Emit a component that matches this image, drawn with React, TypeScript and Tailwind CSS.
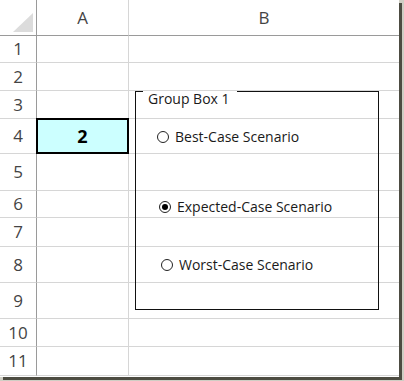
import React from "react";

const rows = [
  { n: "1", h: 27 },
  { n: "2", h: 28 },
  { n: "3", h: 28 },
  { n: "4", h: 35 },
  { n: "5", h: 37 },
  { n: "6", h: 27 },
  { n: "7", h: 29 },
  { n: "8", h: 36 },
  { n: "9", h: 36 },
  { n: "10", h: 28 },
  { n: "11", h: 29 },
];

function Radio({ checked, label, left, top }: { checked?: boolean; label: string; left: number; top: number }) {
  return (
    <div className="absolute flex items-center gap-[6px]" style={{ left, top }}>
      <span className="flex h-[12px] w-[12px] items-center justify-center rounded-full border border-[#222] bg-white">
        {checked && <span className="h-[6px] w-[6px] rounded-full bg-black" />}
      </span>
      <span className="text-[14px] leading-none text-[#1a1a1a]">{label}</span>
    </div>
  );
}

export default function App() {
  return (
    <div className="h-[381px] w-[404px] bg-[#cfcec4]" style={{ fontFamily: '"Open Sans", "Noto Sans", sans-serif' }}>
      <div className="relative h-[377px] w-[399px] bg-white shadow-[3px_3px_0_#4d4c42]">
        <div className="grid grid-cols-[37px_92px_270px]">
          {/* header */}
          <div className="relative h-[36px] border-b border-r border-[#9a9a9a]">
            <div
              className="absolute left-[13px] top-[13px] h-[19px] w-[20px] bg-[#dcdcdc]"
              style={{ clipPath: "polygon(100% 0, 100% 100%, 0 100%)" }}
            />
          </div>
          <div className="flex h-[36px] items-center justify-center border-b border-r border-b-[#9a9a9a] border-r-[#d6d6d6] text-[17px] text-[#444]">
            A
          </div>
          <div className="flex h-[36px] items-center justify-center border-b border-[#9a9a9a] text-[17px] text-[#444]">
            B
          </div>
          {rows.map((r) => (
            <React.Fragment key={r.n}>
              <div
                className="flex items-center justify-center border-b border-r border-b-[#d6d6d6] border-r-[#9a9a9a] text-[17px] text-[#444]"
                style={{ height: r.h }}
              >
                {r.n}
              </div>
              <div className="relative border-b border-r border-[#d6d6d6]" style={{ height: r.h }}>
                {r.n === "4" && (
                  <div className="absolute left-[-1px] top-[-1px] right-[-1px] bottom-[-1px] flex items-center justify-center border-2 border-black bg-[#ccffff] text-[18px] font-bold text-black">
                    2
                  </div>
                )}
              </div>
              <div className="border-b border-[#d6d6d6]" style={{ height: r.h }} />
            </React.Fragment>
          ))}
        </div>

        {/* Group box form control */}
        <div className="absolute left-[135px] top-[91px] h-[219px] w-[244px] border border-[#111]">
          <span className="absolute left-[7px] top-[-1px] bg-white pl-[5px] pr-[7px] text-[14px] leading-[16px] text-[#1a1a1a]">
            Group Box 1
          </span>
          <Radio label="Best-Case Scenario" left={21} top={38} />
          <Radio checked label="Expected-Case Scenario" left={23} top={108} />
          <Radio label="Worst-Case Scenario" left={25} top={166} />
        </div>
      </div>
    </div>
  );
}
